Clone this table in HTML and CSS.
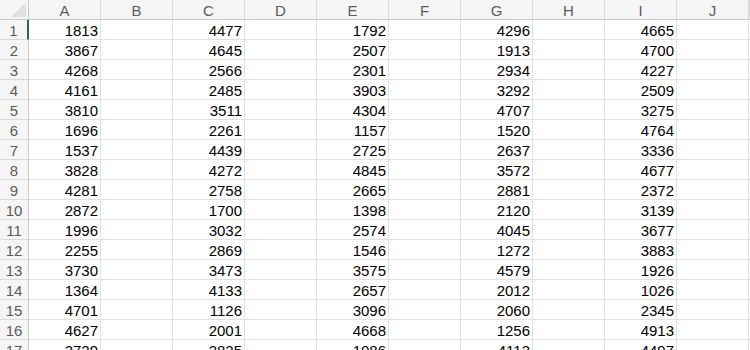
FILE: index.html
```html
<!DOCTYPE html>
<html>
<head>
<meta charset="utf-8">
<link rel="stylesheet" href="styles.css">
</head>
<body>
<div class="sheet" id="sheet"></div>
<script src="app.js"></script>
</body>
</html>
```

FILE: styles.css
```css
html, body {
  margin: 0;
  padding: 0;
  background: #ffffff;
  overflow: hidden;
}
.sheet {
  display: grid;
  grid-template-columns: 29px repeat(10, 72px) 1px;
  grid-auto-rows: 20px;
  width: 750px;
  height: 350px;
  overflow: hidden;
  font-family: "Liberation Sans", Arial, sans-serif;
  font-size: 15px;
  color: #000;
}
.cell {
  box-sizing: border-box;
  border-right: 1px solid #e1e1e1;
  border-bottom: 1px solid #e1e1e1;
  text-align: right;
  padding: 1px 2px 0 0;
  line-height: 19px;
  white-space: nowrap;
  overflow: hidden;
}
.colhead {
  box-sizing: border-box;
  background: #f5f5f5;
  border-right: 1px solid #dadada;
  border-bottom: 1px solid #c9c9c9;
  color: #5c5c5c;
  text-align: center;
  line-height: 19px;
  padding-top: 1px;
  overflow: hidden;
}
.corner {
  box-sizing: border-box;
  background: #f5f5f5;
  border-right: 1px solid #c9c9c9;
  border-bottom: 1px solid #c9c9c9;
  position: relative;
}
.corner::after {
  content: "";
  position: absolute;
  right: 2px;
  bottom: 2px;
  width: 0;
  height: 0;
  border-left: 15px solid transparent;
  border-bottom: 15px solid #e0e0e0;
}
.rowhead {
  box-sizing: border-box;
  background: #f5f5f5;
  border-right: 1px solid #c9c9c9;
  border-bottom: 1px solid #dadada;
  color: #5c5c5c;
  text-align: center;
  line-height: 19px;
  padding-top: 1px;
}
.rowhead.active {
  border-right: 2px solid #1e6e42;
}
```

FILE: app.js
```js
var data = [
  [1813,4477,1792,4296,4665],
  [3867,4645,2507,1913,4700],
  [4268,2566,2301,2934,4227],
  [4161,2485,3903,3292,2509],
  [3810,3511,4304,4707,3275],
  [1696,2261,1157,1520,4764],
  [1537,4439,2725,2637,3336],
  [3828,4272,4845,3572,4677],
  [4281,2758,2665,2881,2372],
  [2872,1700,1398,2120,3139],
  [1996,3032,2574,4045,3677],
  [2255,2869,1546,1272,3883],
  [3730,3473,3575,4579,1926],
  [1364,4133,2657,2012,1026],
  [4701,1126,3096,2060,2345],
  [4627,2001,4668,1256,4913],
  [3729,2825,1086,4113,4497]
];
var sheet = document.getElementById('sheet');
var cols = ['A','B','C','D','E','F','G','H','I','J',''];
function el(cls, text) {
  var d = document.createElement('div');
  d.className = cls;
  if (text !== undefined) d.textContent = text;
  sheet.appendChild(d);
}
el('corner');
cols.forEach(function (c) { el('colhead', c); });
data.forEach(function (row, r) {
  el('rowhead' + (r === 0 ? ' active' : ''), String(r + 1));
  for (var c = 0; c < 11; c++) {
    var v = (c % 2 === 0 && c < 10) ? String(row[c / 2]) : '';
    el('cell', v);
  }
});
```
